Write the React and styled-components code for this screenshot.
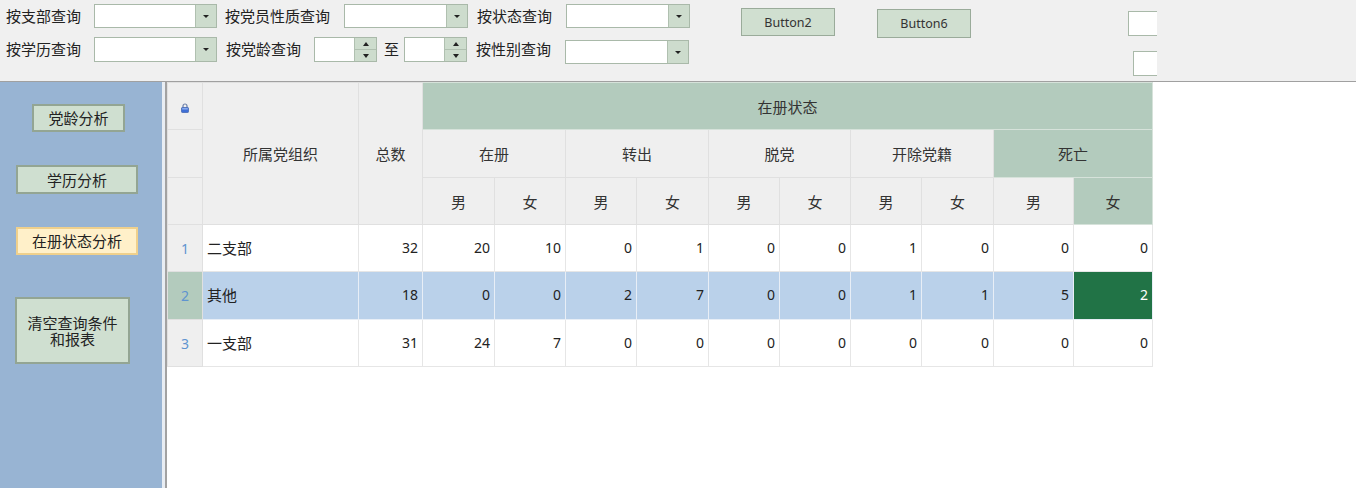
import React from "react";
import styled, { createGlobalStyle, css } from "styled-components";

const Global = createGlobalStyle`
  html, body { margin: 0; padding: 0; background: #ffffff; }
  body { font-family: "Noto Sans CJK SC", "Noto Sans", sans-serif; color: #333; }
  * { box-sizing: border-box; }
`;

const Page = styled.div`
  width: 1356px;
  height: 488px;
  display: flex;
  flex-direction: column;
  overflow: hidden;
`;

const TopPanel = styled.div`
  height: 82px;
  flex: none;
  background: #f0f0f0;
  border-bottom: 1px solid #a0a0a0;
  display: flex;
  align-items: flex-start;
`;

const Form = styled.div`
  display: flex;
  flex-direction: column;
`;

const FormRow = styled.div`
  display: flex;
  align-items: flex-start;
  height: ${(p) => p.h}px;
  padding-top: ${(p) => p.top}px;
`;

const Label = styled.span`
  font-size: 15px;
  line-height: 20px;
  color: #222;
  white-space: nowrap;
  margin-left: ${(p) => p.ml || 0}px;
  margin-top: ${(p) => p.mt || 2}px;
  width: ${(p) => p.w}px;
  flex: none;
`;

const fieldBorder = css`
  border: 1px solid #a9b9a9;
  background: #ffffff;
`;

const Combo = styled.div`
  ${fieldBorder};
  display: flex;
  width: ${(p) => p.w || 123}px;
  height: ${(p) => p.h || 24}px;
  margin-left: ${(p) => p.ml || 0}px;
  margin-top: ${(p) => p.mt || 0}px;
  flex: none;
`;

const ComboText = styled.div`
  flex: 1;
  background: #fff;
`;

const ComboButton = styled.div`
  width: 21px;
  background: #cddccd;
  border-left: 1px solid #b0c0b0;
  display: flex;
  align-items: center;
  justify-content: center;
  &::after {
    content: "";
    border-left: 3px solid transparent;
    border-right: 3px solid transparent;
    border-top: 3px solid #222;
  }
`;

const Spinner = styled.div`
  ${fieldBorder};
  display: flex;
  width: 63px;
  height: 25px;
  margin-left: ${(p) => p.ml || 0}px;
  flex: none;
`;

const SpinButtons = styled.div`
  width: 22px;
  display: flex;
  flex-direction: column;
  border-left: 1px solid #b0c0b0;
`;

const SpinHalf = styled.div`
  flex: 1;
  background: #cddccd;
  display: flex;
  align-items: center;
  justify-content: center;
  & + & { border-top: 1px solid #b0c0b0; }
  &::after {
    content: "";
    border-left: 3px solid transparent;
    border-right: 3px solid transparent;
    ${(p) =>
      p.up
        ? "border-bottom: 4px solid #222;"
        : "border-top: 4px solid #222;"}
  }
`;

const PushButton = styled.button`
  flex: none;
  width: 94px;
  height: ${(p) => p.h || 28}px;
  margin-left: ${(p) => p.ml}px;
  margin-top: ${(p) => p.mt}px;
  background: #d0dfd0;
  border: 1px solid #9aab9a;
  font-family: "Noto Sans", "Liberation Sans", sans-serif;
  font-size: 12.5px;
  color: #333;
  padding: 0;
`;

const TextBoxes = styled.div`
  display: flex;
  flex-direction: column;
  margin-left: ${(p) => p.ml}px;
`;

const TextBox = styled.div`
  width: ${(p) => p.w}px;
  height: 25px;
  margin-left: ${(p) => p.ml || 0}px;
  margin-top: ${(p) => p.mt}px;
  background: #fff;
  border: 1px solid #a9b9a9;
  border-right: none;
`;

const Main = styled.div`
  flex: 1;
  display: flex;
  min-height: 0;
`;

const Sidebar = styled.div`
  width: 162px;
  flex: none;
  background: #98b4d3;
  display: flex;
  flex-direction: column;
  align-items: flex-start;
  padding-top: 22px;
`;

const SideButton = styled.button`
  flex: none;
  width: ${(p) => p.w}px;
  height: ${(p) => p.h}px;
  margin-left: ${(p) => p.ml}px;
  margin-top: ${(p) => p.mt}px;
  background: ${(p) => (p.active ? "#fff0c9" : "#cfdfd0")};
  border: 2px solid ${(p) => (p.active ? "#efd08c" : "#93a593")};
  font-family: "Noto Sans CJK SC", sans-serif;
  font-size: 15px;
  line-height: 16px;
  color: #222;
  padding: 0;
  white-space: pre-line;
`;

const Splitter = styled.div`
  width: 5px;
  flex: none;
  background: #e8edf3;
  border-right: 2px solid #a2a2a2;
`;

const GridArea = styled.div`
  flex: 1;
  background: #ffffff;
  overflow: hidden;
`;

const Table = styled.table`
  border-collapse: collapse;
  table-layout: fixed;
  width: 985px;
  font-size: 15px;
  color: #333;
`;

const Row = styled.tr`
  height: ${(p) => p.h}px;
`;

const HeadCell = styled.th`
  font-weight: normal;
  background: ${(p) => (p.green ? "#b3cbbd" : "#efefef")};
  border: 1px solid ${(p) => (p.green ? "#d6e2da" : "#e0e0e0")};
  text-align: center;
  vertical-align: middle;
  padding: 0;
  color: #333;
`;

const RowHead = styled.td`
  background: ${(p) => (p.selected ? "#b3cbbd" : "#efefef")};
  border: 1px solid #e0e0e0;
  text-align: center;
  color: #5f94d0;
  font-family: "Noto Sans", sans-serif;
  font-size: 14px;
  padding: 0;
`;

const Cell = styled.td`
  background: ${(p) => (p.current ? "#217346" : p.selected ? "#bad1ea" : "#ffffff")};
  color: ${(p) => (p.current ? "#ffffff" : "#222")};
  border: 1px solid ${(p) => (p.selected ? "#e8eef6" : "#e6e6e6")};
  text-align: ${(p) => (p.left ? "left" : "right")};
  padding: ${(p) => (p.left ? "0 0 2px 4px" : "0 4px 2px 0")};
  font-size: ${(p) => (p.left ? 15 : 14)}px;
  font-family: ${(p) => (p.left ? '"Noto Sans CJK SC", sans-serif' : '"Noto Sans", sans-serif')};
`;

const Lock = () => (
  <svg width="8" height="10" viewBox="0 0 8 10">
    <path d="M2 4.5V3a2 2 0 0 1 4 0v1.5" fill="none" stroke="#6b7fa8" strokeWidth="1.2" />
    <rect x="0.5" y="4.5" width="7" height="5" rx="0.8" fill="#3f6fd6" stroke="#2d54a8" strokeWidth="0.6" />
    <rect x="1.2" y="5.1" width="5.6" height="1.4" fill="#8fb0f0" />
  </svg>
);

const colWidths = [35, 156, 64, 72, 71, 71, 72, 71, 71, 71, 72, 80, 79];
const groups = ["在册", "转出", "脱党", "开除党籍", "死亡"];
const data = [
  { n: 1, org: "二支部", total: 32, v: [20, 10, 0, 1, 0, 0, 1, 0, 0, 0] },
  { n: 2, org: "其他", total: 18, v: [0, 0, 2, 7, 0, 0, 1, 1, 5, 2], selected: true },
  { n: 3, org: "一支部", total: 31, v: [24, 7, 0, 0, 0, 0, 0, 0, 0, 0] },
];
const rowHeights = [47, 48, 47];

const ComboBox = (props) => (
  <Combo {...props}>
    <ComboText />
    <ComboButton />
  </Combo>
);

const NumBox = (props) => (
  <Spinner {...props}>
    <ComboText />
    <SpinButtons>
      <SpinHalf up />
      <SpinHalf />
    </SpinButtons>
  </Spinner>
);

export default function App() {
  return (
    <Page>
      <Global />
      <TopPanel>
        <Form>
          <FormRow h={37} top={4}>
            <Label ml={6} w={88}>按支部查询</Label>
            <ComboBox w={123} />
            <Label ml={8} w={119}>按党员性质查询</Label>
            <ComboBox w={124} />
            <Label ml={9} w={89}>按状态查询</Label>
            <ComboBox w={124} />
          </FormRow>
          <FormRow h={30} top={0}>
            <Label ml={6} w={88}>按学历查询</Label>
            <ComboBox w={123} h={25} />
            <Label ml={9} w={88}>按党龄查询</Label>
            <NumBox />
            <Label ml={7} w={20} mt={0}>至</Label>
            <NumBox ml={0} />
            <Label ml={9} w={89} mt={0}>按性别查询</Label>
            <ComboBox w={124} mt={3} />
          </FormRow>
        </Form>
        <PushButton ml={51} mt={8} h={28}>Button2</PushButton>
        <PushButton ml={42} mt={9} h={29}>Button6</PushButton>
        <TextBoxes ml={157}>
          <TextBox w={29} mt={11} />
          <TextBox w={24} ml={5} mt={15} />
        </TextBoxes>
      </TopPanel>
      <Main>
        <Sidebar>
          <SideButton w={93} h={28} ml={32} mt={0}>党龄分析</SideButton>
          <SideButton w={122} h={29} ml={16} mt={33}>学历分析</SideButton>
          <SideButton w={122} h={28} ml={16} mt={33} active>在册状态分析</SideButton>
          <SideButton w={115} h={67} ml={15} mt={42}>{"清空查询条件\n和报表"}</SideButton>
        </Sidebar>
        <Splitter />
        <GridArea>
          <Table>
            <colgroup>
              {colWidths.map((w, i) => (
                <col key={i} style={{ width: w }} />
              ))}
            </colgroup>
            <thead>
              <Row h={47}>
                <HeadCell><Lock /></HeadCell>
                <HeadCell rowSpan={3}>所属党组织</HeadCell>
                <HeadCell rowSpan={3}>总数</HeadCell>
                <HeadCell colSpan={10} green>在册状态</HeadCell>
              </Row>
              <Row h={48}>
                <HeadCell />
                {groups.map((g, i) => (
                  <HeadCell key={g} colSpan={2} green={i === 4}>{g}</HeadCell>
                ))}
              </Row>
              <Row h={47}>
                <HeadCell />
                {groups.map((g, i) => (
                  <React.Fragment key={g}>
                    <HeadCell>男</HeadCell>
                    <HeadCell green={i === 4}>女</HeadCell>
                  </React.Fragment>
                ))}
              </Row>
            </thead>
            <tbody>
              {data.map((r, ri) => (
                <Row key={r.n} h={rowHeights[ri]}>
                  <RowHead selected={r.selected}>{r.n}</RowHead>
                  <Cell left selected={r.selected}>{r.org}</Cell>
                  <Cell selected={r.selected}>{r.total}</Cell>
                  {r.v.map((x, i) => (
                    <Cell key={i} selected={r.selected} current={r.selected && i === 9}>{x}</Cell>
                  ))}
                </Row>
              ))}
            </tbody>
          </Table>
        </GridArea>
      </Main>
    </Page>
  );
}
